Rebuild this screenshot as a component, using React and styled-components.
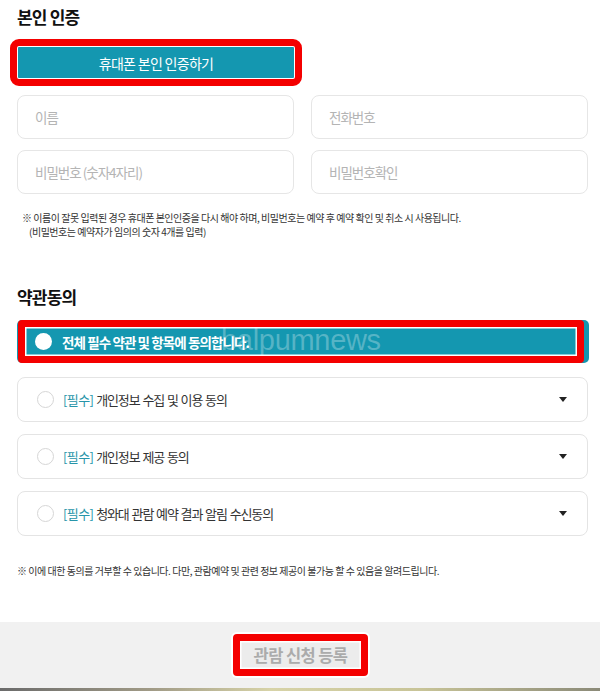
import styled, { createGlobalStyle } from "styled-components";

const GlobalStyle = createGlobalStyle`
  body {
    margin: 0;
    background: #fff;
    font-family: "Noto Sans CJK KR", "Noto Sans", sans-serif;
    color: #222;
  }
  * { box-sizing: border-box; }
`;

const TEAL = "#1497b0";

const terms = [
  "개인정보 수집 및 이용 동의",
  "개인정보 제공 동의",
  "청와대 관람 예약 결과 알림 수신동의",
];

const App = () => {
  return (
    <>
      <GlobalStyle />
      <Main>
        <Title>본인 인증</Title>
        <VerifyButton type="button">휴대폰 본인 인증하기</VerifyButton>

        <InputGrid>
          <Field placeholder="이름" />
          <Field placeholder="전화번호" />
          <Field placeholder="비밀번호 (숫자4자리)" />
          <Field placeholder="비밀번호확인" />
        </InputGrid>

        <Notice>
          <p>※ 이름이 잘못 입력된 경우 휴대폰 본인인증을 다시 해야 하며, 비밀번호는 예약 후 예약 확인 및 취소 시 사용됩니다.</p>
          <p className="indent">(비밀번호는 예약자가 임의의 숫자 4개를 입력)</p>
        </Notice>

        <Title $top={46}>약관동의</Title>
        <AllAgree>
          <Dot $filled />
          <AllText>전체 필수 약관 및 항목에 동의합니다.</AllText>
          <Watermark>balpumnews</Watermark>
        </AllAgree>

        <TermList>
          {terms.map((t) => (
            <TermRow key={t}>
              <Dot />
              <TermText>
                <em>[필수]</em> {t}
              </TermText>
              <Caret width="8" height="5" viewBox="0 0 8 5">
                <path d="M0 0h8L4 5z" fill="#222" />
              </Caret>
            </TermRow>
          ))}
        </TermList>

        <Notice $top={28} $left={16}>
          <p>※ 이에 대한 동의를 거부할 수 있습니다. 다만, 관람예약 및 관련 정보 제공이 불가능 할 수 있음을 알려드립니다.</p>
        </Notice>
      </Main>

      <Footer>
        <SubmitButton type="button">관람 신청 등록</SubmitButton>
      </Footer>
      <PhotoEdge />
    </>
  );
};

export default App;

const Main = styled.main`
  padding: 0 12px 0 17px;
`;

const Title = styled.h2`
  margin: ${(p) => p.$top ?? 5}px 0 0;
  font-size: 17px;
  line-height: 24px;
  font-weight: 700;
  letter-spacing: -0.8px;
  color: #111;
`;

const VerifyButton = styled.button`
  display: block;
  margin: 18px 0 0 1px;
  width: calc(50% - 9.5px);
  height: 31px;
  border: none;
  border-radius: 1px;
  background: ${TEAL};
  color: #fff;
  font-family: inherit;
  font-size: 14px;
  letter-spacing: -0.7px;
  outline: 7px solid #f40000;
  outline-offset: 1px;
`;

const InputGrid = styled.div`
  margin-top: 17px;
  display: grid;
  grid-template-columns: 1fr 1fr;
  column-gap: 17px;
  row-gap: 11px;
`;

const Field = styled.input`
  height: 44px;
  width: 100%;
  border: 1px solid #e6e6e6;
  border-radius: 8px;
  padding: 0 17px;
  font-family: inherit;
  font-size: 13.5px;
  letter-spacing: -1px;
  background: #fff;
  &::placeholder {
    color: #b4b4b4;
  }
`;

const Notice = styled.div`
  margin-top: ${(p) => p.$top ?? 17}px;
  padding-left: ${(p) => (p.$left ?? 22) - 17}px;
  font-size: 10px;
  line-height: 14px;
  letter-spacing: -0.47px;
  color: #333;
  p {
    margin: 0;
    white-space: nowrap;
  }
  .indent {
    padding-left: 7px;
  }
`;

const AllAgree = styled.div`
  position: relative;
  margin-top: 11px;
  height: 43px;
  width: calc(100% + 1px);
  display: flex;
  align-items: center;
  padding-left: 18px;
  background: ${TEAL};
  border-radius: 5px;
  &::after {
    content: "";
    position: absolute;
    top: 0;
    bottom: 0;
    left: 1px;
    right: 5px;
    border: 7px solid #f40000;
    border-radius: 4px;
    box-shadow: inset 0 0 0 1.5px #fff;
  }
`;

const Dot = styled.span`
  flex: none;
  width: 17px;
  height: 17px;
  border-radius: 50%;
  background: #fff;
  border: ${(p) => (p.$filled ? "none" : "1px solid #d6d6d6")};
`;

const AllText = styled.span`
  margin-left: 10px;
  color: #fff;
  font-size: 13.5px;
  font-weight: 700;
  letter-spacing: -0.9px;
`;

const Watermark = styled.span`
  position: absolute;
  left: 204px;
  top: 6px;
  font-family: "Liberation Sans", Arial, sans-serif;
  font-size: 29px;
  line-height: 29px;
  color: rgba(255, 255, 255, 0.28);
  letter-spacing: -0.3px;
  pointer-events: none;
`;

const TermList = styled.div`
  margin-top: 14px;
  display: flex;
  flex-direction: column;
  gap: 12px;
`;

const TermRow = styled.div`
  height: 45px;
  display: flex;
  align-items: center;
  padding: 0 20px 0 19px;
  border: 1px solid #e4e4e4;
  border-radius: 8px;
`;

const TermText = styled.span`
  flex: 1;
  margin-left: 9px;
  font-size: 13px;
  letter-spacing: -1.1px;
  word-spacing: 1px;
  color: #333;
  em {
    font-style: normal;
    color: #2795a9;
    letter-spacing: -0.6px;
  }
`;

const Caret = styled.svg`
  flex: none;
  display: block;
`;

const Footer = styled.footer`
  margin-top: 44px;
  height: 66px;
  background: #f1f1f1;
  display: flex;
  justify-content: center;
  align-items: center;
  padding-left: 1px;
`;

const SubmitButton = styled.button`
  width: 135px;
  height: 42px;
  border: 7px solid #f40000;
  border-radius: 4px;
  background: #ececec;
  box-shadow: inset 0 0 0 1.5px #fff, 0 0 0 2px #fff;
  color: #ababab;
  font-family: inherit;
  font-size: 16.5px;
  font-weight: 700;
  letter-spacing: -0.6px;
  padding: 0;
`;

const PhotoEdge = styled.div`
  height: 3px;
  background: linear-gradient(90deg, #6b6b6b 0%, #a09a86 25%, #d7d3a8 45%, #c8c498 70%, #8b8a78 100%);
`;
